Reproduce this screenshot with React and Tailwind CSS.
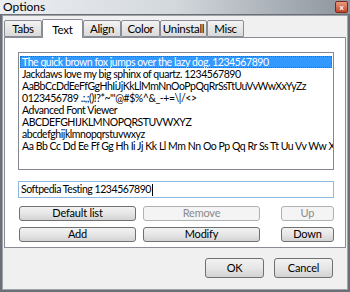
import React from "react";

const font = { fontFamily: 'Lato, "Liberation Sans", Arial, sans-serif' };

function Tab({ label, w, selected }) {
  if (selected) {
    return (
      <div
        className={`${w} h-[19px] -mb-px relative z-10 bg-white border border-[#898c95] border-b-0 rounded-t-[2px] flex justify-center pt-[1px] text-[11.5px] tracking-[-0.2px] text-black`}
      >
        {label}
      </div>
    );
  }
  return (
    <div
      className={`${w} h-[17px] bg-gradient-to-b from-[#f3f3f3] to-[#dadada] border border-[#898c95] rounded-t-[2px] flex items-center justify-center text-[11.5px] tracking-[-0.3px] text-black`}
    >
      {label}
    </div>
  );
}

function Btn({ label, w, disabled, h = "h-[15px]" }) {
  if (disabled) {
    return (
      <div
        className={`${w} ${h} rounded-[3px] border border-[#adb2b5] bg-[#f4f4f4] flex items-center justify-center text-[11px] tracking-[-0.2px] text-[#8a8a8a]`}
      >
        {label}
      </div>
    );
  }
  return (
    <div
      className={`${w} ${h} rounded-[3px] border border-[#707070] bg-gradient-to-b from-[#f2f2f2] via-[#e6e6e6] to-[#d3d3d3] flex items-center justify-center text-[11px] tracking-[-0.2px] text-black`}
    >
      {label}
    </div>
  );
}

export default function App() {
  const lines = [
    "Jackdaws love my big sphinx of quartz. 1234567890",
    "AaBbCcDdEeFfGgHhIiJjKkLlMmNnOoPpQqRrSsTtUuVvWwXxYyZz",
    "0123456789 .:,;()!?*~'\"@#$%^&_-+=\\|/<>",
    "Advanced Font Viewer",
    "ABCDEFGHIJKLMNOPQRSTUVWXYZ",
    "abcdefghijklmnopqrstuvwxyz",
    "Aa Bb Cc Dd Ee Ff Gg Hh Ii Jj Kk Ll Mm Nn Oo Pp Qq Rr Ss Tt Uu Vv Ww Xx Yy Zz",
  ];
  return (
    <div
      className="w-[350px] h-[292px] overflow-hidden flex flex-col bg-[#6b7077]"
      style={font}
    >
      {/* title bar */}
      <div className="h-[14px] flex items-start justify-between bg-gradient-to-r from-[#eceff2] via-[#d3d8dd] to-[#8d949c] pl-[3px] pr-[2px]">
        <span className="text-[12px] leading-[13px] text-black">Options</span>
        <div className="mt-[1px] w-[13px] h-[12px] rounded-[2px] border border-[#7a2a1c] bg-gradient-to-b from-[#e89a80] to-[#c4452a] flex items-center justify-center text-[8px] leading-none font-bold text-white">
          x
        </div>
      </div>
      {/* body */}
      <div className="flex-1 mx-[2px] mb-[2px] mt-[1px] bg-[#f0f0f0] border border-[#a0a4aa] flex flex-col">
        <div className="pl-[1px] pr-[1px] pt-[2px]">
          <div className="flex items-end h-[19px]">
            <Tab label="Tabs" w="w-[38px]" />
            <Tab label="Text" w="w-[41px]" selected />
            <Tab label="Align" w="w-[38px]" />
            <Tab label="Color" w="w-[39px]" />
            <Tab label="Uninstall" w="w-[47px]" />
            <Tab label="Misc" w="w-[37px]" />
          </div>
          <div className="h-[211px] bg-white border border-[#898c95] pl-[13px] pr-[11px] pt-[14px]">
            <div className="h-[118px] border border-[#828790] bg-white overflow-hidden pt-[3px] pl-[1px] pr-[1px] text-[10.5px] tracking-[-0.45px]">
              <div className="h-[12px] bg-[#3399ff] text-white leading-[12px] pl-[2px] whitespace-nowrap outline outline-1 outline-dotted outline-[#1f6fc0] -outline-offset-1">
                The quick brown fox jumps over the lazy dog. 1234567890
              </div>
              {lines.map((l) => (
                <div
                  key={l}
                  className="h-[12px] leading-[12px] pl-[2px] whitespace-nowrap text-black"
                >
                  {l}
                </div>
              ))}
            </div>
            <div className="mt-[11px] h-[17px] border border-[#8fb8e0] bg-white flex items-center pl-[2px] text-[10.5px] tracking-[-0.45px] text-black">
              Softpedia Testing 1234567890
              <span className="inline-block w-px h-[12px] bg-black ml-[1px]" />
            </div>
            <div className="mt-[8px] flex gap-x-[7px] pl-[1px]">
              <Btn label="Default list" w="w-[119px]" />
              <Btn label="Remove" w="w-[119px]" disabled />
              <div className="w-[7px]" />
              <Btn label="Up" w="w-[54px]" disabled />
            </div>
            <div className="mt-[6px] flex gap-x-[7px] pl-[1px]">
              <Btn label="Add" w="w-[119px]" />
              <Btn label="Modify" w="w-[119px]" />
              <div className="w-[7px]" />
              <Btn label="Down" w="w-[54px]" />
            </div>
          </div>
        </div>
        <div className="flex justify-end gap-[10px] pr-[14px] mt-[10px]">
          <Btn label="OK" w="w-[59px]" h="h-[20px]" />
          <Btn label="Cancel" w="w-[59px]" h="h-[20px]" />
        </div>
      </div>
    </div>
  );
}
